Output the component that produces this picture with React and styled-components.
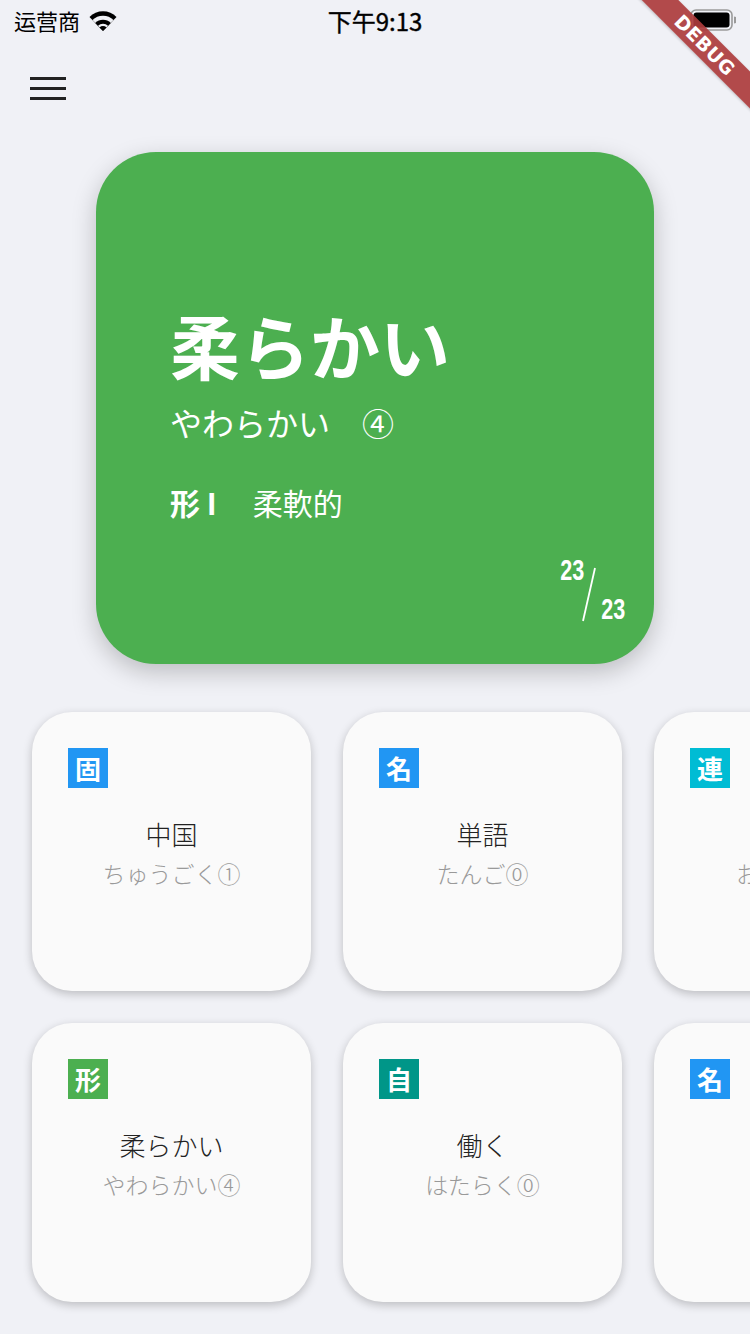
import React from 'react';
import styled, { createGlobalStyle } from 'styled-components';

const GlobalStyle = createGlobalStyle`
  html, body {
    margin: 0;
    padding: 0;
    background: #f0f1f6;
    overflow: hidden;
  }
  body {
    font-family: "Noto Sans CJK JP", "Noto Sans", sans-serif;
  }
`;

const Screen = styled.div`
  position: relative;
  width: 750px;
  height: 1334px;
  background: #f0f1f6;
  overflow: hidden;
`;

const StatusBar = styled.div`
  height: 40px;
  display: flex;
  align-items: center;
  justify-content: space-between;
  padding: 0 14px;
  font-size: 22px;
  color: #000;
`;

const Carrier = styled.div`
  display: flex;
  align-items: center;
  gap: 8px;
  width: 180px;
`;

const Time = styled.div`
  font-weight: 400;
  font-size: 24px;
  -webkit-text-stroke: 0.4px #000;
`;

const Battery = styled.div`
  width: 180px;
  display: flex;
  justify-content: flex-end;
`;

const AppBar = styled.div`
  height: 88px;
  box-sizing: border-box;
  display: flex;
  align-items: flex-start;
  padding: 37px 0 0 30px;
`;

const Burger = styled.div`
  display: flex;
  flex-direction: column;
  gap: 7px;
  span {
    display: block;
    width: 36px;
    height: 3px;
    background: #222;
  }
`;

const HeroWrap = styled.div`
  padding: 24px 0 0 96px;
`;

const Hero = styled.div`
  width: 558px;
  height: 512px;
  box-sizing: border-box;
  border-radius: 60px;
  background: #4caf50;
  color: #fff;
  box-shadow: 0 8px 24px rgba(0, 0, 0, 0.22);
  display: flex;
  flex-direction: column;
  padding: 158px 32px 42px 74px;
`;

const Title = styled.div`
  font-size: 70px;
  font-weight: 700;
  line-height: 70px;
`;

const Reading = styled.div`
  font-size: 32px;
  line-height: 40px;
  margin-top: 22px;
`;

const Meaning = styled.div`
  font-size: 30px;
  line-height: 40px;
  margin-top: 40px;
  display: flex;
  b {
    font-weight: 700;
    margin-right: 36px;
  }
`;

const Counter = styled.div`
  margin-top: auto;
  align-self: flex-end;
  display: flex;
  height: 64px;
`;

const Num = styled.div`
  font-family: "Liberation Sans", sans-serif;
  font-weight: 700;
  font-size: 30px;
  line-height: 26px;
  width: 24px;
  transform: scaleX(0.72);
  align-self: ${({ $bottom }) => ($bottom ? 'flex-end' : 'flex-start')};
  margin-top: ${({ $bottom }) => ($bottom ? '0' : '-1px')};
`;

const Slash = styled.svg`
  width: 16px;
  height: 64px;
  margin: 0 1px 0 0;
`;

const Scroller = styled.div`
  overflow: hidden;
  padding: 48px 0 40px 32px;
  display: flex;
  flex-direction: column;
  gap: 32px;
`;

const Row = styled.div`
  display: flex;
  gap: 32px;
`;

const Card = styled.div`
  flex: 0 0 279px;
  height: 279px;
  box-sizing: border-box;
  border-radius: 40px;
  background: #fafafa;
  box-shadow: 0 3px 10px rgba(0, 0, 0, 0.22);
  padding: 36px;
  display: flex;
  flex-direction: column;
`;

const Badge = styled.div`
  width: 40px;
  height: 40px;
  background: ${({ $color }) => $color};
  color: #fff;
  font-weight: 700;
  font-size: 26px;
  line-height: 40px;
  text-align: center;
`;

const Word = styled.div`
  margin-top: 28px;
  text-align: center;
  font-size: 26px;
  font-weight: 300;
  line-height: 36px;
  color: #222;
`;

const Kana = styled.div`
  text-align: center;
  font-size: 23px;
  font-weight: 300;
  line-height: 34px;
  margin-top: 4px;
  color: #999;
`;

const Ribbon = styled.div`
  position: absolute;
  left: 605px;
  top: 32px;
  width: 200px;
  height: 26px;
  transform: rotate(45deg);
  background: rgba(172, 60, 60, 0.92);
  color: #fff;
  font-family: "DejaVu Sans", sans-serif;
  font-weight: 700;
  font-size: 19px;
  line-height: 26px;
  text-align: center;
  letter-spacing: 0.5px;
  box-shadow: 0 1px 3px rgba(0, 0, 0, 0.2);
`;

const rows = [
  [
    { tag: '固', color: '#2196f3', word: '中国', kana: 'ちゅうごく①' },
    { tag: '名', color: '#2196f3', word: '単語', kana: 'たんご⓪' },
    { tag: '連', color: '#00bcd4', word: '大きな', kana: 'おおきな①' },
  ],
  [
    { tag: '形', color: '#4caf50', word: '柔らかい', kana: 'やわらかい④' },
    { tag: '自', color: '#009688', word: '働く', kana: 'はたらく⓪' },
    { tag: '名', color: '#2196f3', word: '本', kana: 'ほん①' },
  ],
];

function Wifi() {
  return (
    <svg width="30" height="23" viewBox="0 0 30 23">
      <path d="M15 22 L1.5 8 A19 19 0 0 1 28.5 8 Z" fill="#000" />
      <path d="M15 22 L4.5 11.1 A14.6 14.6 0 0 1 25.5 11.1 Z" fill="#f0f1f6" />
      <path d="M15 22 L7.2 13.9 A11 11 0 0 1 22.8 13.9 Z" fill="#000" />
      <path d="M15 22 L10 16.8 A7 7 0 0 1 20 16.8 Z" fill="#f0f1f6" />
      <path d="M15 22 L11.5 18.4 A4.9 4.9 0 0 1 18.5 18.4 Z" fill="#000" />
    </svg>
  );
}

function BatteryIcon() {
  return (
    <svg width="46" height="22" viewBox="0 0 46 22">
      <rect x="1" y="1" width="41" height="20" rx="5" fill="none" stroke="#9a9a9a" strokeWidth="1.6" />
      <rect x="3.5" y="3.5" width="36" height="15" rx="3" fill="#000" />
      <path d="M44 7.5 a3 3 0 0 1 0 7 z" fill="#9a9a9a" />
    </svg>
  );
}

export default function App() {
  return (
    <Screen>
      <GlobalStyle />
      <StatusBar>
        <Carrier>
          运营商
          <Wifi />
        </Carrier>
        <Time>下午9:13</Time>
        <Battery>
          <BatteryIcon />
        </Battery>
      </StatusBar>
      <AppBar>
        <Burger>
          <span />
          <span />
          <span />
        </Burger>
      </AppBar>
      <HeroWrap>
        <Hero>
          <Title>柔らかい</Title>
          <Reading>やわらかい　④</Reading>
          <Meaning>
            <b>形 I</b>
            柔軟的
          </Meaning>
          <Counter>
            <Num>23</Num>
            <Slash viewBox="0 0 16 64">
              <line x1="14" y1="10" x2="2" y2="63" stroke="#fff" strokeWidth="1.8" />
            </Slash>
            <Num $bottom>23</Num>
          </Counter>
        </Hero>
      </HeroWrap>
      <Scroller>
        {rows.map((row, i) => (
          <Row key={i}>
            {row.map((item, j) => (
              <Card key={j}>
                <Badge $color={item.color}>{item.tag}</Badge>
                <Word>{item.word}</Word>
                <Kana>{item.kana}</Kana>
              </Card>
            ))}
          </Row>
        ))}
      </Scroller>
      <Ribbon>DEBUG</Ribbon>
    </Screen>
  );
}
